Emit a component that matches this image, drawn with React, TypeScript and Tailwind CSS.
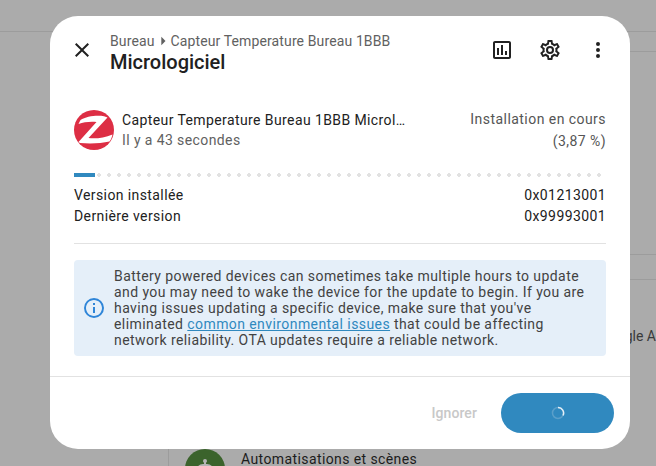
const CLOSE = "M19,6.41L17.59,5L12,10.59L6.41,5L5,6.41L10.59,12L5,17.59L6.41,19L12,13.41L17.59,19L19,17.59L13.41,12L19,6.41Z";
const CHART = "M9 17H7V10H9V17M13 17H11V7H13V17M17 17H15V13H17V17M19 19H5V5H19V19.1M19 3H5C3.9 3 3 3.9 3 5V19C3 20.1 3.9 21 5 21H19C20.1 21 21 20.1 21 19V5C21 3.9 20.1 3 19 3Z";
const COG = "M12,8A4,4 0 0,1 16,12A4,4 0 0,1 12,16A4,4 0 0,1 8,12A4,4 0 0,1 12,8M12,10A2,2 0 0,0 10,12A2,2 0 0,0 12,14A2,2 0 0,0 14,12A2,2 0 0,0 12,10M10,22C9.75,22 9.54,21.82 9.5,21.58L9.13,18.93C8.5,18.68 7.96,18.34 7.44,17.94L4.95,18.95C4.73,19.03 4.46,18.95 4.34,18.73L2.34,15.27C2.21,15.05 2.27,14.78 2.46,14.63L4.57,12.97L4.5,12L4.57,11L2.46,9.37C2.27,9.22 2.21,8.95 2.34,8.73L4.34,5.27C4.46,5.05 4.73,4.96 4.95,5.05L7.44,6.05C7.96,5.66 8.5,5.32 9.13,5.07L9.5,2.42C9.54,2.18 9.75,2 10,2H14C14.25,2 14.46,2.18 14.5,2.42L14.87,5.07C15.5,5.32 16.04,5.66 16.56,6.05L19.05,5.05C19.27,4.96 19.54,5.05 19.66,5.27L21.66,8.73C21.79,8.95 21.73,9.22 21.54,9.37L19.43,11L19.5,12L19.43,13L21.54,14.63C21.73,14.78 21.79,15.05 21.66,15.27L19.66,18.73C19.54,18.95 19.27,19.04 19.05,18.95L16.56,17.95C16.04,18.34 15.5,18.68 14.87,18.93L14.5,21.58C14.46,21.82 14.25,22 14,22H10M11.25,4L10.88,6.61C9.68,6.86 8.62,7.5 7.85,8.39L5.44,7.35L4.69,8.65L6.8,10.2C6.4,11.37 6.4,12.64 6.8,13.8L4.68,15.36L5.43,16.66L7.86,15.62C8.63,16.5 9.68,17.14 10.87,17.38L11.24,20H12.76L13.13,17.39C14.32,17.14 15.37,16.5 16.14,15.62L18.57,16.66L19.32,15.36L17.2,13.81C17.6,12.64 17.6,11.37 17.2,10.2L19.31,8.65L18.56,7.35L16.15,8.39C15.38,7.5 14.32,6.86 13.13,6.62L12.75,4H11.25Z";
const DOTS = "M12,16A2,2 0 0,1 14,18A2,2 0 0,1 12,20A2,2 0 0,1 10,18A2,2 0 0,1 12,16M12,10A2,2 0 0,1 14,12A2,2 0 0,1 12,14A2,2 0 0,1 10,12A2,2 0 0,1 12,10M12,4A2,2 0 0,1 14,6A2,2 0 0,1 12,8A2,2 0 0,1 10,6A2,2 0 0,1 12,4Z";
const CARET = "M10,17L15,12L10,7V17Z";
const INFO = "M11,9H13V7H11M12,20C7.59,20 4,16.41 4,12C4,7.59 7.59,4 12,4C16.41,4 20,7.59 20,12C20,16.41 16.41,20 12,20M12,2A10,10 0 0,0 2,12A10,10 0 0,0 12,22A10,10 0 0,0 22,12A10,10 0 0,0 12,2M11,17H13V11H11V17Z";
const ROBOT = "M12,2A2,2 0 0,1 14,4C14,4.74 13.6,5.39 13,5.73V7H14A7,7 0 0,1 21,14H22A1,1 0 0,1 23,15V18A1,1 0 0,1 22,19H21V20A2,2 0 0,1 19,22H5A2,2 0 0,1 3,20V19H2A1,1 0 0,1 1,18V15A1,1 0 0,1 2,14H3A7,7 0 0,1 10,7H11V5.73C10.4,5.39 10,4.74 10,4A2,2 0 0,1 12,2Z";

function Icon({ d, className }: { d: string; className: string }) {
  return (
    <svg viewBox="0 0 24 24" className={className} fill="currentColor">
      <path d={d} />
    </svg>
  );
}

function ZigbeeLogo() {
  return (
    <svg viewBox="0 0 40 40" className="h-10 w-10 shrink-0">
      <circle cx="20" cy="20" r="20" fill="#dd2e44" />
      <path d="M6.5 10C12 6.5 22 5 30 6.2L33.5 7.6L14.5 28C21 29 30 28 38.5 24.5C38 27 37 29.5 35.5 31.5C27 33.5 16 34 6 33L4.5 32L22.5 12C16 11.5 10 12 4.5 14Z" fill="#ffffff" />
    </svg>
  );
}

export default function App() {
  return (
    <div className="relative h-[466px] w-[656px] overflow-hidden bg-[#ababab] font-['Roboto',sans-serif]">
      <div className="h-8 border-b border-[#9c9c9c]" />
      <div className="ml-[168px] flex h-[434px] flex-col border-l border-[#9c9c9c]">
        <div className="h-5 border-b border-[#9c9c9c]" />
        <div className="mt-[202px] h-[26px] border-y border-[#9c9c9c]" />
        <div className="mt-[46px] text-right text-[14px] leading-5 text-[#3a3a3a] whitespace-nowrap">gle A</div>
        <div className="mt-auto -mb-[3px] flex items-start gap-[16px] pl-4">
          <div className="-mb-10 flex h-10 w-10 items-center justify-center rounded-full bg-[#3b632c]">
            <Icon d={ROBOT} className="h-6 w-6 text-[#b5b5b5]" />
          </div>
          <span className="text-[14px] leading-5 tracking-[0.4px] text-[#1c1c1c]">Automatisations et scènes</span>
        </div>
      </div>

      <div className="absolute left-[50px] top-4 flex h-[433px] w-[580px] flex-col rounded-[28px] bg-white">
        <div className="flex h-[68px] items-center pl-5 pr-3">
          <Icon d={CLOSE} className="h-6 w-6 text-[#212121]" />
          <div className="ml-4 flex min-w-0 flex-1 flex-col pt-[5px]">
            <div className="flex items-center text-[14px] leading-4 tracking-[0.12px] text-[#616161]">
              <span>Bureau</span>
              <Icon d={CARET} className="-mx-[2px] h-5 w-5" />
              <span>Capteur Temperature Bureau 1BBB</span>
            </div>
            <div className="-mt-px text-[20px] font-medium leading-6 text-[#212121]">Micrologiciel</div>
          </div>
          <div className="flex items-center gap-6 pr-[8px] text-[#212121]">
            <Icon d={CHART} className="h-6 w-6" />
            <Icon d={COG} className="h-6 w-6" />
            <Icon d={DOTS} className="h-6 w-6" />
          </div>
        </div>

        <div className="flex flex-col px-6">
          <div className="mt-[26px] flex h-10 items-center">
            <ZigbeeLogo />
            <div className="ml-2 w-[285px] min-w-0 tracking-[0.4px]">
              <div className="truncate text-[14px] leading-5 text-[#212121]">Capteur Temperature Bureau 1BBB Micrologiciel</div>
              <div className="text-[14px] leading-5 text-[#616161]">Il y a 43 secondes</div>
            </div>
            <div className="ml-auto text-right text-[14px] tracking-[0.45px] text-[#555555]">
              <div className="leading-[22px]">Installation en cours</div>
              <div className="leading-[22px]">(3,87 %)</div>
            </div>
          </div>

          <div className="mt-[23px] flex h-1 w-[532px]">
            <div className="h-1 w-[21px] bg-[#3089bf]" />
            <div className="h-1 flex-1 bg-[radial-gradient(circle,#e2e2e2_1.7px,transparent_2px)] bg-[length:10px_4px] bg-[position:-1px_0]" />
          </div>

          <div className="mt-2 flex h-[21px] items-center justify-between text-[14px] tracking-[0.4px] text-[#212121]">
            <span>Version installée</span>
            <span>0x01213001</span>
          </div>
          <div className="flex h-[21px] items-center justify-between text-[14px] tracking-[0.4px] text-[#212121]">
            <span>Dernière version</span>
            <span>0x99993001</span>
          </div>

          <div className="mt-[16px] border-t border-[#e2e2e2]" />

          <div className="mt-4 flex h-[96px] items-center rounded bg-[#e5eff9] pl-2 pr-2">
            <Icon d={INFO} className="h-6 w-6 shrink-0 text-[#2f85d8]" />
            <p className="ml-2 text-[14px] leading-4 tracking-[0.42px] text-[#424242]">
              Battery powered devices can sometimes take multiple hours to update and you may need to wake the device for the update to begin. If you are having issues updating a specific device, make sure that you've eliminated{" "}
              <span className="text-[#3089bf] underline">common environmental issues</span> that could be affecting network reliability. OTA updates require a reliable network.
            </p>
          </div>
        </div>

        <div className="mt-5 border-t border-[#e2e2e2]" />
        <div className="flex flex-1 items-center justify-end pr-4">
          <span className="mr-6 text-[14px] font-medium tracking-[0.1px] text-[#c8c8c8]">Ignorer</span>
          <div className="flex h-10 w-[113px] items-center justify-center rounded-[20px] bg-[#3089bf]">
            <svg viewBox="0 0 14 14" className="h-[14px] w-[14px]" fill="none">
              <circle cx="7" cy="7" r="5.5" stroke="#5a9fca" strokeWidth="1.5" />
              <path d="M7 1.5A5.5 5.5 0 0 1 12 9.5" stroke="#e6f0f7" strokeWidth="1.5" />
            </svg>
          </div>
        </div>
      </div>
    </div>
  );
}
